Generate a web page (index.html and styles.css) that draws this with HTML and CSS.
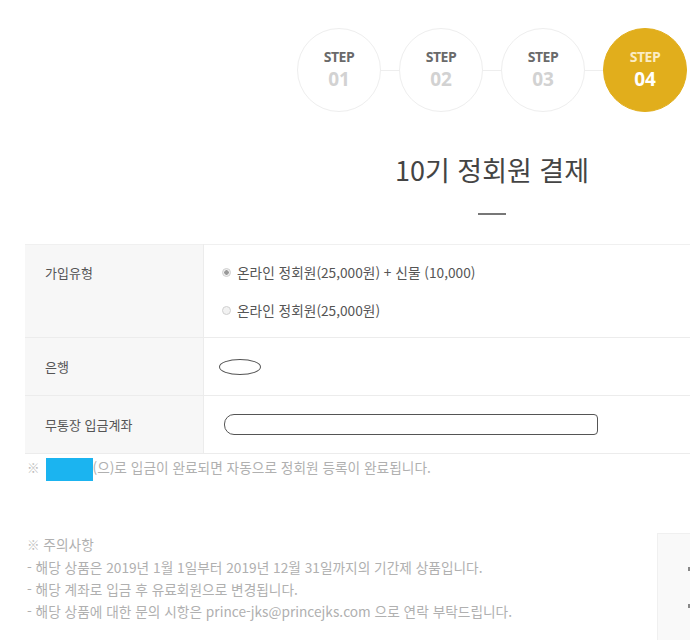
FILE: index.html
```html
<!DOCTYPE html>
<html lang="ko">
<head>
    <meta charset="UTF-8">
    <meta name="viewport" content="width=device-width, initial-scale=1.0">
    <title>10기 정회원 결제</title>
    <link rel="stylesheet" href="styles.css">
</head>
<body>

<div class="page">
    <div class="steps">
        <div class="step">
            <span class="step-label">STEP</span>
            <span class="step-num">01</span>
        </div>
        <div class="step-line"></div>
        <div class="step">
            <span class="step-label">STEP</span>
            <span class="step-num">02</span>
        </div>
        <div class="step-line"></div>
        <div class="step">
            <span class="step-label">STEP</span>
            <span class="step-num">03</span>
        </div>
        <div class="step-line"></div>
        <div class="step active">
            <span class="step-label">STEP</span>
            <span class="step-num">04</span>
        </div>
    </div>

    <h1 class="title">10기 정회원 결제</h1>
    <div class="title-bar"></div>

    <table class="pay-table">
        <tr class="row-type">
            <th>가입유형</th>
            <td>
                <label class="option">
                    <input type="radio" name="plan" checked>
                    <span>온라인 정회원(25,000원) + 신물 (10,000)</span>
                </label>
                <label class="option">
                    <input type="radio" name="plan">
                    <span>온라인 정회원(25,000원)</span>
                </label>
            </td>
        </tr>
        <tr>
            <th>은행</th>
            <td><span class="mask mask-bank"></span></td>
        </tr>
        <tr>
            <th>무통장 입금계좌</th>
            <td><span class="mask mask-account"></span></td>
        </tr>
    </table>

    <p class="notice"><span class="mark">※</span><span class="mask-blue"></span>(으)로 입금이 완료되면 자동으로 정회원 등록이 완료됩니다.</p>

    <div class="caution-wrap">
        <div class="caution">
            <p><span class="mark">※</span> 주의사항</p>
            <p>- 해당 상품은 2019년 1월 1일부터 2019년 12월 31일까지의 기간제 상품입니다.</p>
            <p>- 해당 계좌로 입금 후 유료회원으로 변경됩니다.</p>
            <p>- 해당 상품에 대한 문의 시항은 prince-jks@princejks.com 으로 연락 부탁드립니다.</p>
        </div>
        <div class="summary">
            <span class="summary-mark"></span>
            <span class="summary-mark"></span>
        </div>
    </div>
</div>

</body>
</html>
```

FILE: styles.css
```css
body {
    margin: 0;
    background-color: white;
    font-family: "Noto Sans CJK KR", "Noto Sans", sans-serif;
    overflow: hidden;
}

.page {
    width: 934px;
    margin-left: 25px;
    padding-top: 28px;
}

.steps {
    display: flex;
    justify-content: center;
    align-items: center;
}

.step {
    width: 82px;
    height: 82px;
    border: 1px solid #eeeeee;
    border-radius: 50%;
    display: flex;
    flex-direction: column;
    align-items: center;
    justify-content: center;
    font-family: "Open Sans", sans-serif;
    font-weight: bold;
}

.step-label {
    font-size: 14px;
    line-height: 18px;
    color: #6a6a6a;
    letter-spacing: -0.5px;
}

.step-num {
    font-size: 19px;
    line-height: 26px;
    color: #d2d2d2;
}

.step.active {
    background-color: #e1ae1c;
    border-color: #e1ae1c;
}

.step.active .step-label {
    color: #fbecc4;
}

.step.active .step-num {
    color: white;
}

.step-line {
    width: 18px;
    height: 1px;
    background-color: #eeeeee;
}

.title {
    margin: 40px 0 0;
    text-align: center;
    font-size: 27px;
    line-height: 35px;
    font-weight: normal;
    color: #444;
}

.title-bar {
    width: 28px;
    height: 2px;
    background-color: #777;
    margin: 26px auto 0;
}

.pay-table {
    width: 100%;
    margin-top: 29px;
    border-collapse: collapse;
    border-top: 1px solid #f0f0f0;
    font-size: 13px;
    color: #555;
}

.pay-table tr {
    border-bottom: 1px solid #ececec;
}

.pay-table th {
    width: 158px;
    padding: 0 0 0 20px;
    background-color: #f7f7f7;
    border-right: 1px solid #ececec;
    text-align: left;
    font-weight: normal;
    height: 57px;
    line-height: 20px;
}

.pay-table td {
    padding: 0 0 0 18px;
    line-height: 20px;
}

.row-type th {
    vertical-align: top;
    padding-top: 18px;
}

.row-type td {
    padding-top: 17px;
    padding-bottom: 17px;
}

.option {
    display: flex;
    align-items: center;
    gap: 6px;
    font-size: 13.7px;
}

.option + .option {
    margin-top: 18px;
}

.option input {
    appearance: none;
    width: 9px;
    height: 9px;
    margin: 0;
    border: 1px solid #d0d0d0;
    border-radius: 50%;
    background-color: #f2f2f2;
}

.option input:checked {
    background: radial-gradient(circle, #999 0 2px, #eee 2.5px);
}

.mask {
    display: block;
    border: 1.5px solid #555;
}

.mask-bank {
    width: 40px;
    height: 14px;
    margin-left: -3px;
    border-radius: 50%;
}

.mask-account {
    width: 372px;
    height: 19px;
    margin-left: 2px;
    border-radius: 10px 4px 4px 10px;
}

.mark {
    font-size: 12.5px;
    color: #bdbdbd;
}

.notice {
    margin: 2px 0 0 2px;
    font-size: 13.7px;
    line-height: 22px;
    color: #b0b0b0;
}

.mask-blue {
    display: inline-block;
    width: 47px;
    height: 23px;
    margin-left: 6px;
    background-color: #1bb4f0;
    vertical-align: middle;
}

.caution-wrap {
    display: flex;
    margin-top: 52px;
}

.caution {
    flex: 1;
    padding-left: 2px;
    font-size: 13.7px;
    line-height: 22px;
    color: #b0b0b0;
}

.caution p {
    margin: 0;
}

.summary {
    width: 270px;
    height: 140px;
    padding: 33px 0 0 30px;
    background-color: #f9f9f9;
    border: 1px solid #f0f0f0;
    display: flex;
    flex-direction: column;
    gap: 33px;
}

.summary-mark {
    width: 4px;
    height: 4px;
    background-color: #888;
}
```
